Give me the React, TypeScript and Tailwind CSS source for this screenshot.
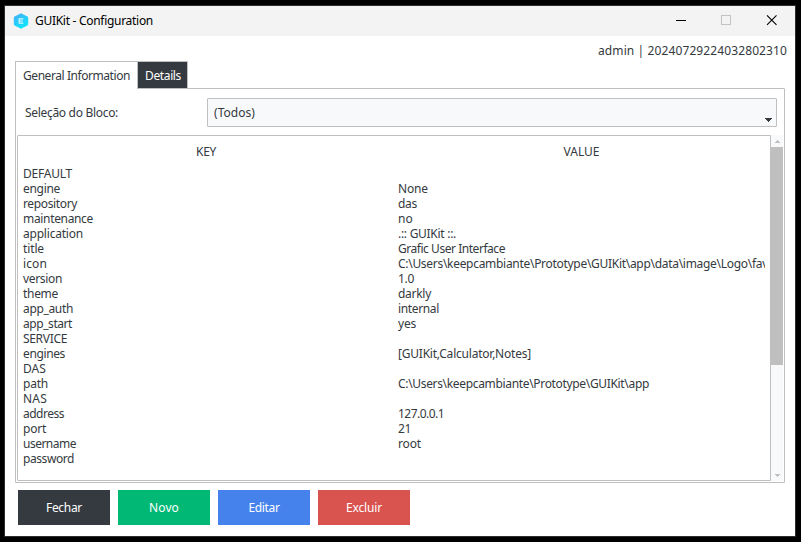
import { useLayoutEffect, useRef } from 'react';

type Cell = [text: string, width: number];

const rows: { key: Cell; value?: Cell }[] = [
  { key: ['DEFAULT', 49] },
  { key: ['engine', 37], value: ['None', 30] },
  { key: ['repository', 54], value: ['das', 19] },
  { key: ['maintenance', 70], value: ['no', 15] },
  { key: ['application', 60], value: ['.:: GUIKit ::.', 58] },
  { key: ['title', 21], value: ['Grafic User Interface', 107] },
  { key: ['icon', 24], value: ['C:\\Users\\keepcambiante\\Prototype\\GUIKit\\app\\data\\image\\Logo\\fav', 370] },
  { key: ['version', 39], value: ['1.0', 16] },
  { key: ['theme', 35], value: ['darkly', 33] },
  { key: ['app_auth', 50], value: ['internal', 41] },
  { key: ['app_start', 49], value: ['yes', 18] },
  { key: ['SERVICE', 44] },
  { key: ['engines', 42], value: ['[GUIKit,Calculator,Notes]', 133] },
  { key: ['DAS', 23] },
  { key: ['path', 25], value: ['C:\\Users\\keepcambiante\\Prototype\\GUIKit\\app', 251] },
  { key: ['NAS', 24] },
  { key: ['address', 41], value: ['127.0.0.1', 46] },
  { key: ['port', 23], value: ['21', 13] },
  { key: ['username', 53], value: ['root', 23] },
  { key: ['password', 51] },
];

const buttons: { label: string; width: number; color: string }[] = [
  { label: 'Fechar', width: 36, color: 'bg-[#343a40]' },
  { label: 'Novo', width: 30, color: 'bg-[#02b875]' },
  { label: 'Editar', width: 31, color: 'bg-[#4582ec]' },
  { label: 'Excluir', width: 36, color: 'bg-[#d9534f]' },
];

/** A run of text whose tracking is adjusted so that it spans `width` pixels. */
function Fit({ text, width }: { text: string; width: number }) {
  const ref = useRef<HTMLSpanElement>(null);
  useLayoutEffect(() => {
    const el = ref.current;
    if (!el) return;
    el.style.letterSpacing = '0px';
    const natural = el.getBoundingClientRect().width;
    el.style.letterSpacing = `${(width - natural) / text.length}px`;
  }, [text, width]);
  return <span ref={ref} className="inline-block whitespace-pre">{text}</span>;
}

function Logo() {
  return (
    <svg width="16" height="16" viewBox="0 0 16 16">
      <defs>
        <linearGradient id="logo" x1="0" y1="0" x2="0.6" y2="1">
          <stop offset="0" stopColor="#48acf8" />
          <stop offset="1" stopColor="#0ce6fd" />
        </linearGradient>
      </defs>
      <path d="M8 .2 14.4 3.6Q15.2 4 15.2 5v6q0 1-.8 1.4L8 15.8 1.6 12.4Q.8 12 .8 11V5q0-1 .8-1.4Z" fill="url(#logo)" />
      <path d="M10.3 5.8H6.2v4.4h4.1M6.2 8h3.6" fill="none" stroke="#d9f6ff" strokeWidth="1.2" />
    </svg>
  );
}

function TitleBar() {
  return (
    <header className="flex h-[30px] items-center bg-[#f3f3f3] pl-2 text-black">
      <Logo />
      <h1 className="ml-[6px] grow text-[12px] leading-4"><Fit text="GUIKit - Configuration" width={118} /></h1>
      <svg width="120" height="30" viewBox="0 0 120 30" fill="none">
        <path d="M1 14.5h10" stroke="#000" />
        <rect x="46.5" y="9.5" width="9" height="9" stroke="#c3c3c3" />
        <path d="M92 9.3l9.5 9.5M101.500 9.3 92 18.800" stroke="#000" strokeWidth="1.1" />
      </svg>
    </header>
  );
}

function Scrollbar() {
  return (
    <div className="relative z-10 -ml-px flex w-[13px] flex-col">
      <div className="ml-px flex h-3 items-center justify-center bg-[#f8f9fa]">
        <svg width="5" height="3" viewBox="0 0 5 3" shapeRendering="crispEdges">
          <path d="M2 0h1v1h1v1h1v1H0V2h1V1h1z" fill="#bfbfbf" />
        </svg>
      </div>
      <div className="h-[218px] bg-[#bfbfbf]" />
      <div className="ml-px flex grow items-end justify-center bg-[#f8f9fa] pb-[4px]">
        <svg width="5" height="3" viewBox="0 0 5 3" shapeRendering="crispEdges">
          <path d="M0 0h5v1H4v1H3v1H2V2H1V1H0z" fill="#bfbfbf" />
        </svg>
      </div>
    </div>
  );
}

export default function App() {
  return (
    <div className="h-[542px] w-[801px] overflow-hidden bg-black pl-1 pt-[5px] font-['Noto_Sans','Open_Sans',sans-serif] text-[12px] leading-[15px] text-[#343a40]">
      <div className="flex h-[532px] w-[792px] flex-col border border-[#2d2c2e] bg-white">
        <TitleBar />
        <div className="flex h-[25px] items-center justify-end pr-2 pt-[4px]"><Fit text="admin | 20240729224032802310" width={189} /></div>
        <main className="ml-[10px] w-[770px]">
          <div className="relative z-10 flex h-[27px]">
            <div className="h-[28px] w-[122px] rounded-tl-[1px] border-l border-t border-[#bfbfbf] bg-white pl-[7px] pt-[6px]"><Fit text="General Information" width={107} /></div>
            <div className="h-[28px] w-[51px] rounded-tr-[1px] border border-[#bfbfbf] bg-[#343a40] pl-[7px] pt-[6px] text-white"><Fit text="Details" width={36} /></div>
          </div>
          <div className="h-[395px] rounded-b-[1px] rounded-tr-[1px] border border-[#bfbfbf] px-px">
            <div className="flex h-[46px] items-center pt-px">
              <label className="w-[190px] pl-2"><Fit text="Seleção do Bloco:" width={93} /></label>
              <div className="flex h-[29px] w-[570px] items-center justify-between rounded-[1px] border border-[#bfbfbf] bg-[#f8f9fa] pl-[6px] pr-1">
                <Fit text="(Todos)" width={41} />
                <svg className="mt-[15px]" width="7" height="4" viewBox="0 0 7 4" shapeRendering="crispEdges">
                  <path d="M0 0h7v1H6v1H5v1H4v1H3V3H2V2H1V1H0z" fill="#343a40" />
                </svg>
              </div>
            </div>
            <div className="flex h-[346px]">
              <div className="w-[754px] overflow-hidden rounded-l-[1px] border border-[#bfbfbf]">
                <div className="flex h-[30px] items-center pt-px text-center">
                  <div className="w-[376px]"><Fit text="KEY" width={20} /></div>
                  <div className="w-[375px]"><Fit text="VALUE" width={36} /></div>
                </div>
                {rows.map(({ key, value }) => (
                  <div key={key[0]} className="flex h-[15px] pl-[5px]">
                    <div className="w-[375px]"><Fit text={key[0]} width={key[1]} /></div>
                    <div className="w-[367px] overflow-hidden">{value && <Fit text={value[0]} width={value[1]} />}</div>
                  </div>
                ))}
              </div>
              <Scrollbar />
            </div>
          </div>
        </main>
        <footer className="ml-[13px] mt-[7px] flex gap-2 text-white">
          {buttons.map((b) => (
            <button key={b.label} className={`h-[35px] w-[92px] ${b.color}`}><Fit text={b.label} width={b.width} /></button>
          ))}
        </footer>
      </div>
    </div>
  );
}
